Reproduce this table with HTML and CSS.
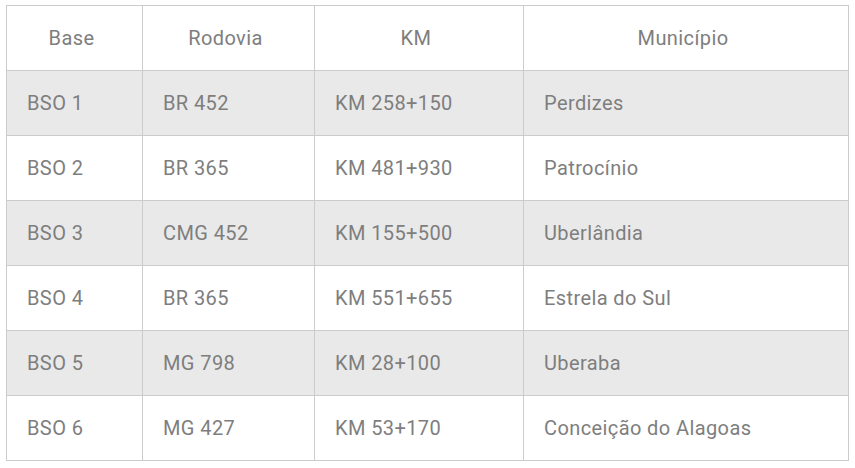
FILE: index.html
```html
<!DOCTYPE html>
<html lang="pt">
<head>
<meta charset="utf-8">
<title>Bases</title>
<link rel="stylesheet" href="styles.css">
</head>
<body>
<table class="bases">
  <colgroup>
    <col class="c-base"><col class="c-rod"><col class="c-km"><col class="c-mun">
  </colgroup>
  <thead>
    <tr><th>Base</th><th>Rodovia</th><th>KM</th><th>Município</th></tr>
  </thead>
  <tbody>
    <tr><td>BSO 1</td><td>BR 452</td><td>KM 258+150</td><td>Perdizes</td></tr>
    <tr><td>BSO 2</td><td>BR 365</td><td>KM 481+930</td><td>Patrocínio</td></tr>
    <tr><td>BSO 3</td><td>CMG 452</td><td>KM 155+500</td><td>Uberlândia</td></tr>
    <tr><td>BSO 4</td><td>BR 365</td><td>KM 551+655</td><td>Estrela do Sul</td></tr>
    <tr><td>BSO 5</td><td>MG 798</td><td>KM 28+100</td><td>Uberaba</td></tr>
    <tr><td>BSO 6</td><td>MG 427</td><td>KM 53+170</td><td>Conceição do Alagoas</td></tr>
  </tbody>
</table>
</body>
</html>
```

FILE: styles.css
```css
html, body {
  margin: 0;
  padding: 0;
  background: #ffffff;
}
body {
  padding: 5px 0 0 6px;
  font-family: Roboto, "Liberation Sans", sans-serif;
}
.bases {
  border-collapse: collapse;
  table-layout: fixed;
  width: 842px;
  color: #7e7e7e;
  font-size: 20px;
  letter-spacing: 0.4px;
}
.c-base { width: 136px; }
.c-rod { width: 172px; }
.c-km { width: 209px; }
.c-mun { width: 325px; }
.bases th,
.bases td {
  border: 1px solid #cccccc;
  height: 65px;
  padding: 0 20px;
  box-sizing: border-box;
  vertical-align: middle;
  font-weight: 400;
}
.bases th {
  text-align: center;
  padding: 0 24px 0 18px;
}
.bases td {
  text-align: left;
}
.bases tbody tr:nth-child(odd) td {
  background: #e9e9e9;
}
```
